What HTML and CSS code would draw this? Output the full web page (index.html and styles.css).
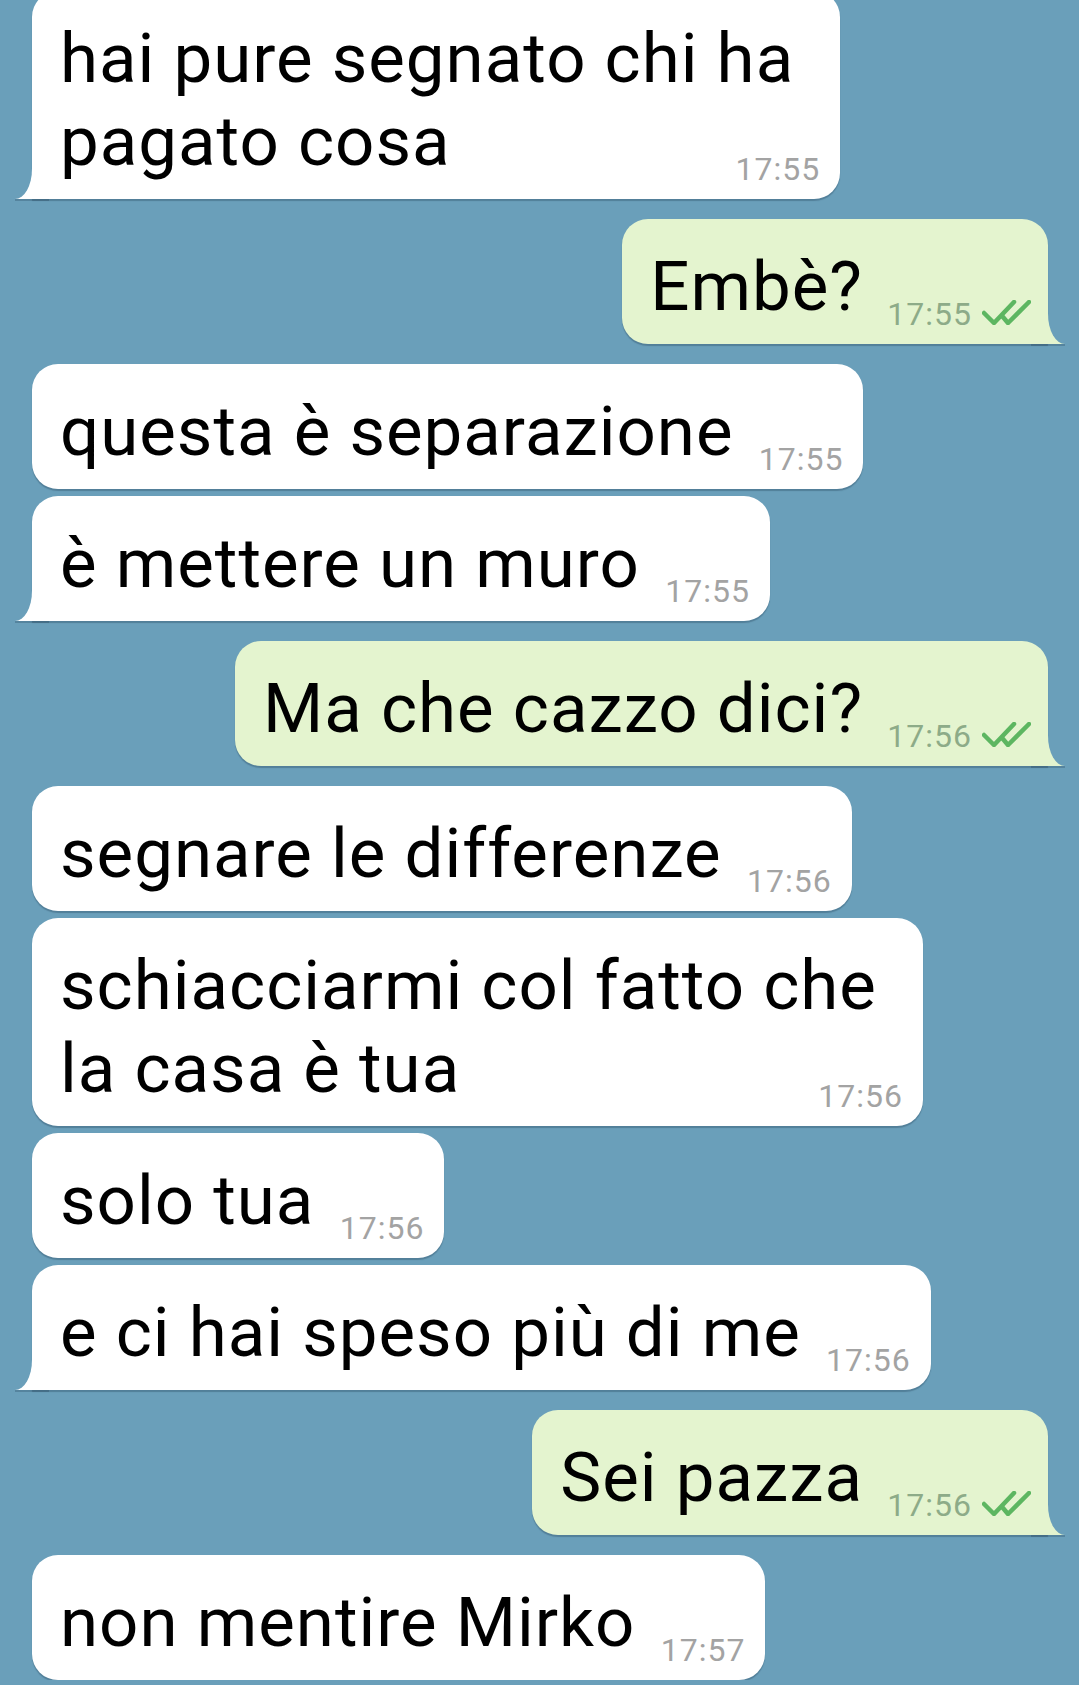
FILE: index.html
```html
<!DOCTYPE html>
<html lang="it">
    <head>
        <meta charset="UTF-8">
        <meta name="viewport" content="width=device-width, initial-scale=1.0">
        <title>Chat</title>
        <link rel="stylesheet" href="styles.css">
    </head>
    <body>

        <!-- Conversazione -->
        <div class="chat">

            <div class="group in">
                <div class="msg tail">
                    <p class="text">hai pure segnato chi ha<br>pagato cosa<span class="spacer"></span></p>
                    <span class="meta"><span class="time">17:55</span></span>
                </div>
            </div>

            <div class="group out">
                <div class="msg tail">
                    <p class="text">Embè?<span class="spacer"></span></p>
                    <span class="meta"><span class="time">17:55</span><svg class="check" width="49" height="25" viewBox="0 0 49 25"><path d="M2 13l10 10L32 2M21 17l5 6L47 2" /></svg></span>
                </div>
            </div>

            <div class="group in">
                <div class="msg">
                    <p class="text">questa è separazione<span class="spacer"></span></p>
                    <span class="meta"><span class="time">17:55</span></span>
                </div>
                <div class="msg tail">
                    <p class="text">è mettere un muro<span class="spacer"></span></p>
                    <span class="meta"><span class="time">17:55</span></span>
                </div>
            </div>

            <div class="group out">
                <div class="msg tail">
                    <p class="text">Ma che cazzo dici?<span class="spacer"></span></p>
                    <span class="meta"><span class="time">17:56</span><svg class="check" width="49" height="25" viewBox="0 0 49 25"><path d="M2 13l10 10L32 2M21 17l5 6L47 2" /></svg></span>
                </div>
            </div>

            <div class="group in">
                <div class="msg">
                    <p class="text">segnare le differenze<span class="spacer"></span></p>
                    <span class="meta"><span class="time">17:56</span></span>
                </div>
                <div class="msg">
                    <p class="text">schiacciarmi col fatto che<br>la casa è tua<span class="spacer"></span></p>
                    <span class="meta"><span class="time">17:56</span></span>
                </div>
                <div class="msg">
                    <p class="text">solo tua<span class="spacer"></span></p>
                    <span class="meta"><span class="time">17:56</span></span>
                </div>
                <div class="msg tail">
                    <p class="text">e ci hai speso più di me<span class="spacer"></span></p>
                    <span class="meta"><span class="time">17:56</span></span>
                </div>
            </div>

            <div class="group out">
                <div class="msg tail">
                    <p class="text">Sei pazza<span class="spacer"></span></p>
                    <span class="meta"><span class="time">17:56</span><svg class="check" width="49" height="25" viewBox="0 0 49 25"><path d="M2 13l10 10L32 2M21 17l5 6L47 2" /></svg></span>
                </div>
            </div>

            <div class="group in">
                <div class="msg">
                    <p class="text">non mentire Mirko<span class="spacer"></span></p>
                    <span class="meta"><span class="time">17:57</span></span>
                </div>
            </div>

        </div>

    </body>
</html>
```

FILE: styles.css
```css
/* Chat */
body {
    margin: 0;
    background-color: #6a9fba;
    font-family: Roboto, "Noto Sans", sans-serif;
    overflow: hidden;
}
.chat {
    display: flex;
    flex-direction: column;
    gap: 20px;
    margin-top: -9px;
    padding: 0 31px 0 32px;
}
.group {
    display: flex;
    flex-direction: column;
    align-items: flex-start;
    gap: 7px;
}
.group.out {
    align-items: flex-end;
}
.msg {
    position: relative;
    background-color: #ffffff;
    border-radius: 26px;
    padding: 26px 46px 16px 28px;
    box-shadow: 0 2px 1px rgba(36, 70, 92, 0.35);
}
.out .msg {
    background-color: #e4f4cf;
}
.text {
    margin: 0;
    font-size: 69px;
    letter-spacing: 1px;
    line-height: 83px;
    color: #000000;
    white-space: nowrap;
}
.spacer {
    display: inline-block;
    width: 84px;
    height: 1px;
}
.out .spacer {
    width: 139px;
}
.meta {
    position: absolute;
    right: 20px;
    bottom: 14px;
    display: flex;
    align-items: baseline;
    gap: 10px;
    font-size: 32px;
    letter-spacing: 1px;
    line-height: 32px;
    color: #a3a3a3;
}
.out .meta {
    right: 17px;
    color: #8dab88;
}
.check {
    margin-bottom: -3px;
}
.check path {
    fill: none;
    stroke: #5db661;
    stroke-width: 4.5;
    stroke-linecap: round;
    stroke-linejoin: round;
}

/* Coda del fumetto */
.in .tail {
    border-bottom-left-radius: 0;
}
.out .tail {
    border-bottom-right-radius: 0;
}
.tail::before,
.tail::after {
    content: "";
    position: absolute;
    bottom: 0;
    height: 30px;
}
.tail::before {
    width: 34px;
    background-color: inherit;
    box-shadow: 0 2px 0 rgba(36, 70, 92, 0.3);
}
.tail::after {
    width: 40px;
    background-color: #6a9fba;
}
.in .tail::before {
    left: -17px;
}
.in .tail::after {
    left: -40px;
    border-bottom-right-radius: 17px 30px;
}
.out .tail::before {
    right: -17px;
}
.out .tail::after {
    right: -40px;
    border-bottom-left-radius: 17px 30px;
}
```
